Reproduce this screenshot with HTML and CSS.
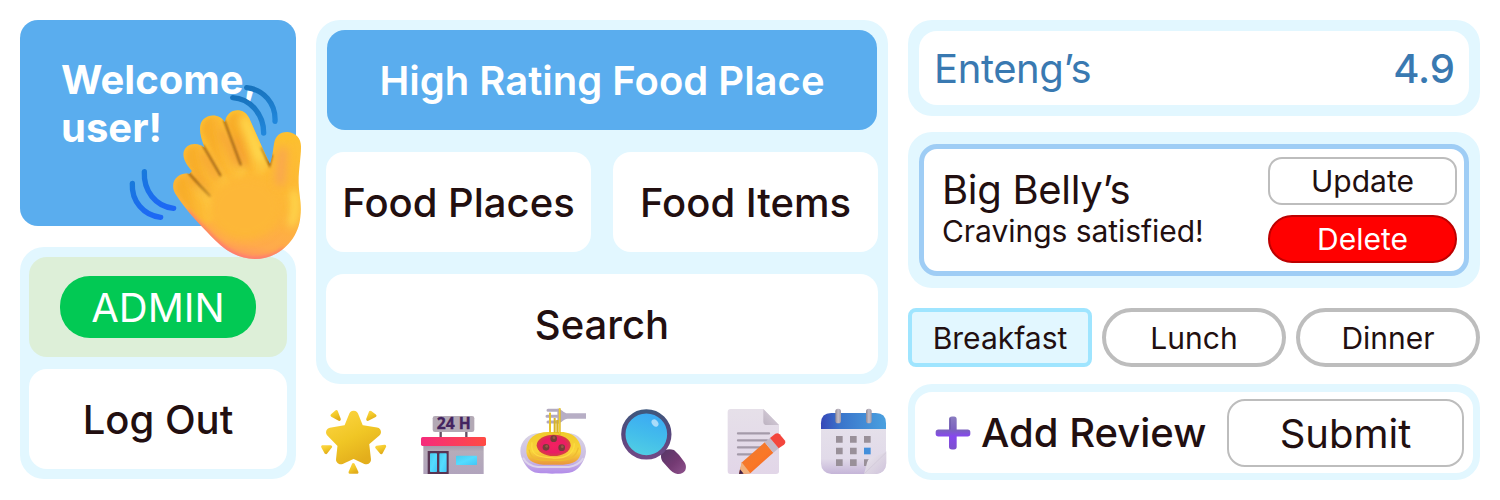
FILE: index.html
```html
<!DOCTYPE html>
<html lang="en">
<head>
<meta charset="utf-8">
<title>Food places</title>
<link rel="stylesheet" href="styles.css">
</head>
<body>
<main class="board">
  <section class="col side">
    <div class="welcome">
      <p class="welcome-text">Welcome,<br>user!</p>
      <svg class="hand" viewBox="0 0 570 570" aria-hidden="true">
        <defs>
          <linearGradient id="palm" x1="0.58" y1="0" x2="0.4" y2="1"><stop offset="0" stop-color="#fdc22f"/><stop offset=".6" stop-color="#fdb638"/><stop offset=".85" stop-color="#ffaa4c"/><stop offset="1" stop-color="#ff8a6c"/></linearGradient>
          <linearGradient id="finger" x1="0" y1=".6" x2="1" y2=".3"><stop offset="0" stop-color="#f8ae2a"/><stop offset=".5" stop-color="#fdba35"/><stop offset="1" stop-color="#fdc53e"/></linearGradient>
          <linearGradient id="wave1" x1="0" y1="0" x2="0" y2="1"><stop offset="0" stop-color="#1873bd"/><stop offset="1" stop-color="#2087dc"/></linearGradient>
          <linearGradient id="wave2" x1="0" y1="0" x2="0" y2="1"><stop offset="0" stop-color="#1879dc"/><stop offset="1" stop-color="#1d68f5"/></linearGradient>
          <filter id="seam" x="-30%" y="-30%" width="160%" height="160%"><feGaussianBlur stdDeviation="3"/></filter>
          <filter id="soft" x="-30%" y="-30%" width="160%" height="160%"><feGaussianBlur stdDeviation="6"/></filter>
          <filter id="glow" filterUnits="userSpaceOnUse" x="100" y="50" width="470" height="520"><feGaussianBlur stdDeviation="13"/></filter>
          <clipPath id="handclip"><path d="M166 341C155 322 158 300 174 289C185 281 196 279 208 282L216 273C190 245 181 216 202 199C217 188 238 190 254 203C238 164 234 133 251 117C273 98 303 106 315 127C318 103 335 89 357 91C373 93 383 103 391 122L430 210L450 252C456 237 458 218 462 191C466 168 480 155 503 156C529 158 545 177 543 205C543 230 535 275 536 310C537 348 546 371 541 410C535 484 472 538 403 537C359 536 321 516 288 483C251 445 199 394 166 341Z"/></clipPath>
        </defs>
        <g fill="none" stroke-width="16" stroke-linecap="round">
          <path stroke="url(#wave1)" d="M380 23C430 28 468 70 465 124"/>
          <path stroke="url(#wave1)" d="M338 53C390 56 431 102 431 159"/>
          <path stroke="url(#wave2)" d="M73 275C70 332 107 380 161 385"/>
          <path stroke="url(#wave2)" d="M37 310C34 363 71 407 122 412"/>
        </g>
        <g clip-path="url(#handclip)">
          <path fill="url(#palm)" d="M150 80H560V550H150Z"/>
          <g fill="none" stroke="url(#finger)" stroke-linecap="round" stroke-width="70" filter="url(#soft)">
            <path d="M202 322L262 392"/><path d="M232 231L300 325"/><path d="M282 146L346 268"/><path d="M356 132L410 250"/>
          </g>
          <g fill="none" stroke="#f39a36" stroke-width="22" stroke-linecap="round" filter="url(#glow)" opacity=".75">
            <path d="M218 292L262 342"/><path d="M256 228L292 290"/><path d="M308 158L350 250"/><path d="M350 180L372 250"/>
          </g>
          <g fill="none" stroke="#9c6212" stroke-width="6" stroke-linecap="round" filter="url(#seam)">
            <path d="M206 279Q240 318 270 348"/><path d="M250 198L301 286"/><path d="M313 122L362 254"/><path d="M424 205L449 256L456 226"/>
          </g>
          <g fill="none" stroke="#ffe052" stroke-width="20" stroke-linecap="round" filter="url(#glow)">
            <path d="M240 330L290 378" opacity=".5"/><path d="M372 120L420 235"/><path d="M522 340Q532 390 515 430"/>
          </g>
          <ellipse cx="375" cy="385" rx="110" ry="95" fill="#fdb737" filter="url(#glow)"/>
          <path d="M488 215L480 305" stroke="#f9a452" stroke-width="26" stroke-linecap="round" filter="url(#glow)"/>
          <path d="M480 180Q500 160 530 185" fill="none" stroke="#fcc02e" stroke-width="14" filter="url(#soft)"/>
          <path d="M200 394C240 440 262 458 288 483C321 516 359 536 403 538C440 538 470 528 492 508" fill="none" stroke="#ff637f" stroke-width="9" filter="url(#soft)"/>
        </g>
      </svg>
    </div>
    <div class="panel side-panel">
      <div class="tile admin"><span class="pill">ADMIN</span></div>
      <div class="tile">Log Out</div>
    </div>
  </section>

  <section class="col middle">
    <div class="panel menu">
      <div class="tile feature">High Rating Food Place</div>
      <div class="pair"><div class="tile">Food Places</div><div class="tile">Food Items</div></div>
      <div class="tile">Search</div>
    </div>
    <div class="icons">
      <svg viewBox="18 12 216 216" aria-hidden="true">
        <defs><linearGradient id="star" x1=".2" y1="0" x2=".7" y2="1"><stop offset="0" stop-color="#fad23c"/><stop offset=".5" stop-color="#f0c625"/><stop offset="1" stop-color="#e3ae1c"/></linearGradient></defs>
        <g fill="url(#star)" stroke="url(#star)" stroke-linejoin="round">
          <path stroke-width="28" d="M131 46L148 88L199 96L163 127L169 179L131 161L92 179L97 133L62 97L114 88Z"/>
          <g stroke-width="9"><path d="M79 35L66 46L88 58Z"/><path d="M181 37L195 47L173 58Z"/><path d="M38 140L62 140L48 158Z"/><path d="M200 142L224 139L214 158Z"/><path d="M130 194L141 217H120Z"/></g>
        </g>
      </svg>
      <svg viewBox="318 12 216 216" aria-hidden="true">
        <defs><linearGradient id="roof"><stop stop-color="#f52b7c"/><stop offset="1" stop-color="#ff4b43"/></linearGradient><linearGradient id="wall" x1="0" y1="0" x2="0" y2="1"><stop stop-color="#9f94a7"/><stop offset=".25" stop-color="#b6acb9"/><stop offset="1" stop-color="#b1a4bd"/></linearGradient><linearGradient id="glass" x1="0" y1="0" x2="1" y2="1"><stop stop-color="#48ccee"/><stop offset=".5" stop-color="#54dcff"/><stop offset="1" stop-color="#43c6f6"/></linearGradient></defs>
        <path d="M392 92V114M469 92V114" stroke="#645064" stroke-width="7"/>
        <rect x="368" y="48" width="125" height="48" rx="7" fill="#b3a9b5"/>
        <text x="431" y="88" class="sign" text-anchor="middle">24 H</text>
        <path d="M340 132H521V222H340Z" fill="url(#wall)"/>
        <rect x="333" y="111" width="195" height="27" rx="5" fill="url(#roof)"/>
        <path d="M353 153H416V222H353Z" fill="#593453"/>
        <rect x="360" y="160" width="21" height="56" rx="2" fill="url(#glass)"/><rect x="388" y="160" width="22" height="56" rx="2" fill="url(#glass)"/>
        <rect x="438" y="167" width="63" height="28" rx="2" fill="url(#glass)"/>
      </svg>
      <svg viewBox="18 12 216 216" aria-hidden="true">
        <defs><linearGradient id="plate" x1="0" y1="0" x2="0" y2="1"><stop stop-color="#d9d4e4"/><stop offset=".65" stop-color="#cbbce2"/><stop offset="1" stop-color="#b28bea"/></linearGradient><linearGradient id="pasta" x1="0" y1="0" x2="0" y2="1"><stop stop-color="#f0cb2b"/><stop offset=".6" stop-color="#f9d33b"/><stop offset="1" stop-color="#e9963d"/></linearGradient><radialGradient id="sauce"><stop stop-color="#f32160"/><stop offset=".7" stop-color="#e91d64"/><stop offset="1" stop-color="#d64042"/></radialGradient></defs>
        <path d="M31 153C31 125 55 99 87 99H172C205 99 228 126 228 154C228 175 211 207 187 216C172 222 87 223 71 216C49 207 31 175 31 153Z" fill="url(#plate)"/>
        <path d="M39 173Q53 198 84 201H176Q206 197 220 175" fill="none" stroke="#ddd3ec" stroke-width="6"/>
        <path d="M49 151C50 114 78 96 113 96H151C192 95 215 124 213 154C211 184 188 193 159 194H100C65 192 48 177 49 151Z" fill="url(#pasta)"/>
        <path d="M57 149C65 190 100 178 139 181C178 184 199 169 205 143" fill="none" stroke="#efbd30" stroke-width="4"/>
        <path d="M66 127C60 170 90 171 130 174C169 176 193 160 193 130" fill="none" stroke="#fddc42" stroke-width="4"/>
        <ellipse cx="131" cy="136" rx="51" ry="32" fill="url(#sauce)"/>
        <path d="M114 31H146M111 49H146M114 66H146" fill="none" stroke="#b3aabf" stroke-width="9" stroke-linecap="round"/><path d="M142 26C156 27 160 39 173 40H228V56H173C160 57 156 69 142 70Z" fill="#b7aec5"/>
        <path d="M120 38V99M134 54V98M149 25V104M142 60V99" stroke="#d9b425" stroke-width="6"/><path d="M120 38V99M149 25V102" stroke="#f3d333" stroke-width="3"/>
        <g fill="#753e39"><circle cx="131" cy="116" r="10"/><circle cx="108" cy="142" r="10"/><circle cx="155" cy="143" r="10"/></g>
        <g fill="#9b5946"><circle cx="132" cy="113" r="4"/><circle cx="110" cy="139" r="4"/><circle cx="157" cy="140" r="4"/></g>
      </svg>
      <svg viewBox="318 12 216 216" aria-hidden="true">
        <defs><linearGradient id="lens" x1=".7" y1="0" x2=".4" y2="1"><stop stop-color="#3aa7f5"/><stop offset=".55" stop-color="#43bdeb"/><stop offset="1" stop-color="#52cfe3"/></linearGradient><linearGradient id="rim" x1="0" y1="0" x2="0" y2="1"><stop stop-color="#3f587e"/><stop offset=".5" stop-color="#59467c"/><stop offset="1" stop-color="#714a86"/></linearGradient><linearGradient id="grip" x1="0" y1="0" x2="1" y2="1"><stop stop-color="#553866"/><stop offset=".55" stop-color="#743a73"/><stop offset="1" stop-color="#8f548e"/></linearGradient></defs>
        <path d="M455 153Q475 144 492 150Q509 164 523 186Q531 198 526 211Q517 224 502 222Q487 219 475 204L457 184Q450 172 455 153Z" fill="url(#grip)"/>
        <circle cx="409" cy="103" r="69" fill="url(#lens)" stroke="url(#rim)" stroke-width="13"/>
        <ellipse cx="435" cy="69" rx="9" ry="12" transform="rotate(-38 435 69)" fill="#a9dcfa"/>
      </svg>
      <svg viewBox="18 12 216 216" aria-hidden="true">
        <defs><linearGradient id="paper" x1="0" y1="0" x2="0" y2="1"><stop stop-color="#e6e0e9"/><stop offset="1" stop-color="#e2d6e8"/></linearGradient><linearGradient id="fold" x1="0" y1="1" x2="1" y2="0"><stop stop-color="#bdb3c1"/><stop offset="1" stop-color="#ddd5e1"/></linearGradient><linearGradient id="pencil" x1="0" y1="0" x2="1" y2="1"><stop stop-color="#e77a39"/><stop offset=".55" stop-color="#fa7827"/><stop offset="1" stop-color="#ef632d"/></linearGradient></defs>
        <path d="M62 27H160L207 75V214Q207 222 198 222H61Q53 222 53 213V36Q53 27 62 27Z" fill="url(#paper)"/>
        <path d="M160 27L207 75H171Q160 75 160 65Z" fill="url(#fold)"/>
        <path d="M84 100H177M84 121H171M84 142H158M84 163H134" stroke="#a49aa9" stroke-width="7" stroke-linecap="round"/>
        <path d="M87 222L96 187L164 127L190 158L121 220Z" fill="url(#pencil)"/>
        <path d="M87 222L95 187L121 220Z" fill="#f1b17e"/><path d="M87 222L90 208L101 221Z" fill="#432047"/>
        <path d="M164 127L180 114L206 145L190 158Z" fill="#c3b9c8"/>
        <path d="M180 114L196 101Q203 97 209 103L224 121Q229 128 222 134L206 145Z" fill="#f3463d"/>
      </svg>
      <svg viewBox="318 12 216 216" aria-hidden="true">
        <defs><linearGradient id="calhead"><stop stop-color="#3647b8"/><stop offset=".3" stop-color="#3a75cb"/><stop offset="1" stop-color="#4aa0df"/></linearGradient><linearGradient id="calpage" x1="0" y1="0" x2="0" y2="1"><stop stop-color="#e7e3eb"/><stop offset=".75" stop-color="#e1dae9"/><stop offset="1" stop-color="#c5b5d8"/></linearGradient><linearGradient id="ring"><stop stop-color="#8f8795"/><stop offset=".5" stop-color="#c3bdc6"/><stop offset="1" stop-color="#a098a7"/></linearGradient><linearGradient id="curl" x1="0" y1="0" x2="1" y2="1"><stop stop-color="#eeeaf1"/><stop offset=".5" stop-color="#ddd6e3"/><stop offset="1" stop-color="#d0c3dc"/></linearGradient></defs>
        <rect x="333" y="39" width="195" height="183" rx="31" fill="url(#calpage)"/>
        <path d="M333 87V70Q333 39 364 39H497Q528 39 528 70V87Z" fill="url(#calhead)"/>
        <path fill="#999099" d="M378 108h20v20h-20zM420 108h20v20h-20zM462 108h20v20h-20zM378 143h20v20h-20zM420 143h20v20h-20zM378 178h20v20h-20zM420 178h20v20h-20zM462 178h20v20h-20z"/>
        <path fill="#438fdb" d="M462 143h20v20h-20z"/>
        <path d="M462 222Q466 209 471 188Q475 172 493 168Q519 163 529 154V190Q526 222 497 222Z" fill="url(#curl)"/>
        <path d="M463 221L528 158" stroke="#cfc6d6" stroke-width="2"/>
        <rect x="376" y="26" width="17" height="44" rx="8" fill="url(#ring)"/><rect x="468" y="26" width="17" height="44" rx="8" fill="url(#ring)"/>
      </svg>
    </div>
  </section>

  <section class="col details">
    <div class="panel rating"><div class="rating-row"><span class="rating-name">Enteng’s</span><span class="score">4.9</span></div></div>
    <div class="panel place">
      <div class="place-card">
        <div class="place-copy"><div class="place-name">Big Belly’s</div><div class="place-note">Cravings satisfied!</div></div>
        <div class="actions"><div class="btn">Update</div><div class="btn delete">Delete</div></div>
      </div>
    </div>
    <div class="chips"><div class="chip active">Breakfast</div><div class="chip">Lunch</div><div class="chip">Dinner</div></div>
    <div class="review">
      <svg class="plus" viewBox="105 362 108 101" aria-hidden="true">
        <defs><linearGradient id="plusfill" x1="0" y1="0" x2="0" y2="1"><stop stop-color="#8a7cc0"/><stop offset=".42" stop-color="#7b60c0"/><stop offset=".6" stop-color="#8648ed"/><stop offset="1" stop-color="#7c50cc"/></linearGradient></defs>
        <path d="M156 363H162Q170 363 170 371V402H203Q211 402 211 410V415Q211 423 203 423H170V454Q170 462 162 462H156Q147 462 147 454V423H115Q107 423 107 415V410Q107 402 115 402H147V371Q147 363 156 363Z" fill="url(#plusfill)"/>
        <path d="M151 368V402" stroke="#6553a3" stroke-width="4" opacity=".5"/>
      </svg>
      <span class="review-label">Add Review</span>
      <div class="submit">Submit</div>
    </div>
  </section>
</main>
</body>
</html>
```

FILE: styles.css
```css
* { box-sizing: border-box; }
body { margin: 0; background: #fff; color: #220f10; font-family: Inter, sans-serif; font-size: 40px; font-weight: 400; line-height: 48px; }
.board { display: grid; grid-template-columns: 276px 572px 572px; column-gap: 20px; width: 1500px; height: 500px; padding: 20px; }
.col { display: flex; flex-direction: column; }
.panel { background: #e2f7ff; border-radius: 24px; }
.tile { display: flex; align-items: center; justify-content: center; height: 100px; padding-top: 2px; border-radius: 18px; background: #fff; font-weight: 500; white-space: nowrap; }

.welcome { position: relative; height: 206px; border-radius: 18px; background: #5aadee; padding: 36px 0 0 41px; color: #fff; font-weight: 700; }
.welcome-text { margin: 0; }
.hand { position: absolute; left: 100px; top: 60px; width: 190px; height: 190px; z-index: 1; }
.side-panel { display: flex; flex-direction: column; gap: 12px; height: 232px; margin-top: 21px; padding: 10px 9px; }
.admin { padding-top: 0; background: #ddefd8; }
.pill { width: 196px; height: 62px; border-radius: 30px; background: #02c954; color: #fff; font-weight: 400; text-align: center; line-height: 64px; }

.menu { display: flex; flex-direction: column; gap: 22px; height: 364px; padding: 10px; }
.feature { margin: 0 1px; background: #5aadee; color: #fff; font-weight: 600; }
.pair { display: grid; grid-template-columns: 265px 265px; gap: 22px; }
.icons { display: flex; gap: 28px; margin-top: 20px; }
.icons svg { width: 72px; height: 72px; }
.sign { font-family: "Open Sans", sans-serif; font-size: 47px; font-weight: 700; fill: #43235f; stroke: #43235f; stroke-width: 1px; }

.rating { height: 96px; padding: 11px; }
.rating-row { display: flex; align-items: center; justify-content: space-between; height: 74px; padding: 2px 14px 0 15px; border-radius: 18px; background: #fff; color: #3979b1; }
.rating-name { letter-spacing: -0.4px; }
.score { font-weight: 500; }
.place { height: 156px; margin-top: 16px; padding: 12px 11px; }
.place-card { display: flex; justify-content: space-between; height: 132px; padding: 8px 7px 8px 18px; border: 5px solid #9fcdf5; border-radius: 18px; background: #fff; }
.place-copy { padding-top: 9px; }
.place-name { letter-spacing: -0.3px; }
.place-note { margin-top: -1px; font-size: 30px; line-height: 36px; letter-spacing: -0.05px; }
.actions { display: flex; flex-direction: column; gap: 10px; width: 189px; }
.btn { height: 48px; border: 2px solid #bdbdbd; border-radius: 14px; font-size: 30px; line-height: 45px; text-align: center; }
.delete { border-color: #bd0000; border-radius: 24px; background: #f00; color: #fff; }
.chips { display: grid; grid-template-columns: repeat(3, 184px); gap: 10px; margin-top: 20px; }
.chip { height: 59px; border: 4px solid #bdbdbd; border-radius: 30px; font-size: 30px; line-height: 53px; text-align: center; }
.active { border-color: #9fe5ff; border-radius: 8px; background: #e2f7ff; }
.review { display: flex; align-items: center; height: 96px; margin-top: 17px; padding: 0 9px 0 20px; border: solid #e2f7ff; border-width: 8px 7px 7px; border-radius: 24px; }
.plus { width: 36px; height: 34px; }
.review-label { margin-left: 10px; font-weight: 500; white-space: nowrap; }
.submit { width: 237px; height: 68px; margin-left: auto; border: 2px solid #bdbdbd; border-radius: 18px; line-height: 66px; text-align: center; }
```
